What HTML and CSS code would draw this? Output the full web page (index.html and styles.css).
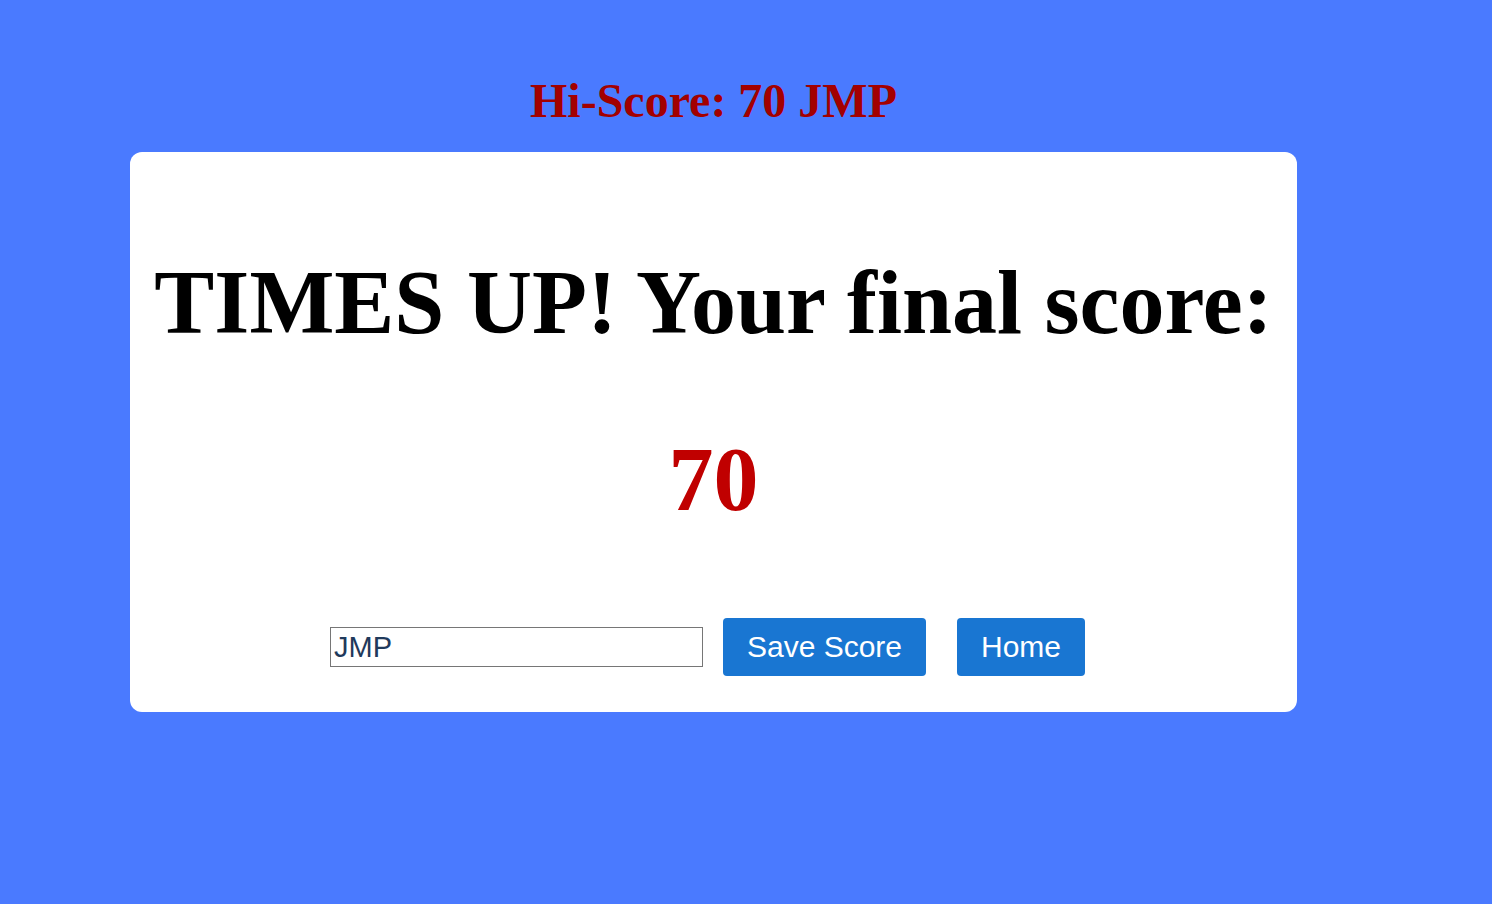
FILE: index.html
```html
<!DOCTYPE html>
<html>
<head>
<meta charset="utf-8">
<link rel="stylesheet" href="styles.css">
</head>
<body>
<div class="page">
  <div class="hiscore">Hi-Score: 70 JMP</div>
  <div class="card">
    <h1 class="title">TIMES UP! Your final score:</h1>
    <div class="score">70</div>
    <div class="row">
      <input class="name" type="text" value="JMP">
      <button class="btn save">Save Score</button>
      <button class="btn home">Home</button>
    </div>
  </div>
</div>
</body>
</html>
```

FILE: styles.css
```css
html, body {
  margin: 0;
  padding: 0;
}
body {
  background: #4a7aff;
  font-family: "Liberation Serif", "Times New Roman", serif;
  width: 1492px;
  height: 904px;
  overflow: hidden;
}
.page {
  padding-left: 130px;
  padding-top: 73px;
}
.hiscore {
  width: 1167px;
  text-align: center;
  font-size: 48px;
  line-height: 56px;
  font-weight: bold;
  color: #a30000;
  margin-bottom: 23px;
}
.card {
  width: 1167px;
  height: 560px;
  box-sizing: border-box;
  background: #ffffff;
  border-radius: 12px;
  padding-top: 101px;
}
.title {
  margin: 0;
  text-align: center;
  font-size: 90px;
  line-height: 100px;
  font-weight: bold;
  color: #000;
}
.score {
  margin-top: 77px;
  text-align: center;
  font-size: 90px;
  line-height: 100px;
  font-weight: bold;
  color: #c00000;
}
.row {
  margin-top: 88px;
  display: flex;
  justify-content: center;
  align-items: center;
  padding-right: 12px;
}
.name {
  width: 373px;
  height: 40px;
  box-sizing: border-box;
  border: 1px solid #767676;
  padding: 1px 3px;
  margin: 0;
  font-family: "Liberation Sans", Arial, sans-serif;
  font-size: 29px;
  color: #1f3a5c;
  background: #fff;
  outline: none;
}
.btn {
  height: 58px;
  box-sizing: border-box;
  border: none;
  border-radius: 4px;
  background: #1976d2;
  color: #fff;
  font-family: "Liberation Sans", Arial, sans-serif;
  font-size: 30px;
  padding: 0 20px;
  margin: 0;
}
.save {
  width: 203px;
  margin-left: 20px;
}
.home {
  width: 128px;
  margin-left: 31px;
}
```
